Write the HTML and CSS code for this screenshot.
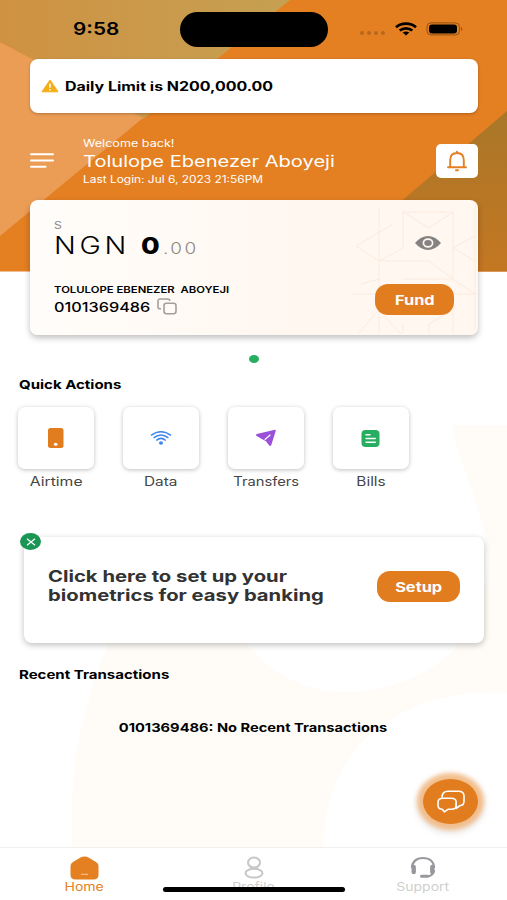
FILE: index.html
```html
<!DOCTYPE html>
<html lang="en">
<head>
    <meta charset="UTF-8">
    <meta name="viewport" content="width=device-width, initial-scale=1.0">
    <title>Home</title>
    <link rel="stylesheet" href="styles.css">
</head>
<body>
    <div class="screen">
        <!-- Background shapes -->
        <svg class="backdrop" width="507" height="900" viewBox="0 0 507 900">
            <defs>
                <linearGradient id="tan" x1="0" y1="0" x2="1" y2="0">
                    <stop offset="0" stop-color="#cf9242"/>
                    <stop offset="1" stop-color="#c6a052"/>
                </linearGradient>
                <linearGradient id="brown" x1="0" y1="0" x2="0" y2="1">
                    <stop offset="0" stop-color="#a97729"/>
                    <stop offset="1" stop-color="#c47722"/>
                </linearGradient>
            </defs>
            <rect width="507" height="271.5" fill="#e47f22"/>
            <polygon points="0,0 290,0 143,119 0,42" fill="url(#tan)"/>
            <polygon points="0,42 143,118 0,236" fill="#eb9d55"/>
            <polygon points="507,111 385,215 385,271.5 507,271.5" fill="url(#brown)"/>
            <path d="M452 425H507V900H72V800C74 740 90 690 108 643L200 620L440 500Z" fill="#fffcf8"/>
            <path d="M452 425C458 465 484 505 488 560C486 600 470 640 440 662C405 686 370 693 340 692C300 690 265 670 240 636L109 640V440Z" fill="#fff"/>
            <path d="M507 693C440 690 405 708 375 730C345 755 325 790 323 848H507Z" fill="#fff"/>
        </svg>

        <div class="status-bar">
            <span class="time"><span class="wide">9:58</span></span>
            <div class="island"></div>
            <div class="status-icons">
                <svg width="28" height="6" viewBox="0 0 28 6" fill="#b8671f">
                    <circle cx="3" cy="3" r="2"/><circle cx="10" cy="3" r="2"/><circle cx="17" cy="3" r="2"/><circle cx="24" cy="3" r="2"/>
                </svg>
                <svg class="status-wifi" width="22" height="14" viewBox="0 0 22 14" fill="none" stroke="#000" stroke-width="2.7">
                    <path d="M1 5.2C6.5 .3 15.5 .3 21 5.2"/>
                    <path d="M4.7 8.6C8.3 5.5 13.7 5.5 17.3 8.6"/>
                    <path d="M7.7 10.6Q11 8.4 14.3 10.6L11 13.6Z" fill="#000" stroke="none"/>
                </svg>
                <svg width="38" height="14" viewBox="0 0 38 14">
                    <rect x="1" y=".9" width="32.5" height="12" rx="4" fill="none" stroke="#955213" stroke-width="1"/>
                    <rect x="3" y="2.5" width="28" height="9" rx="3" fill="#000"/>
                    <path d="M35 5Q37.5 7 35 9Z" fill="#955213"/>
                </svg>
            </div>
        </div>

        <div class="limit-card">
            <svg width="18" height="14" viewBox="0 0 18 14">
                <path d="M9 1L17 12.8H1Z" fill="#f6ad16" stroke="#f6ad16" stroke-linejoin="round"/>
                <path d="M9 4.5V8.8M9 10V11.6" stroke="#fff" stroke-width="1.5"/>
            </svg>
            <span class="limit-text wide">Daily Limit is N200,000.00</span>
        </div>

        <div class="profile">
            <svg class="menu" width="24" height="15" viewBox="0 0 24 15" fill="none" stroke="#fff" stroke-width="2" stroke-linecap="round">
                <path d="M1 1.3H23M1 7.5H23M1 13.7H15.5"/>
            </svg>
            <div class="greeting">
                <div><span class="welcome wide">Welcome back!</span></div>
                <div><span class="user-name wide">Tolulope Ebenezer Aboyeji</span></div>
                <div><span class="last-login wide">Last Login: Jul 6, 2023 21:56PM</span></div>
            </div>
            <div class="bell">
                <svg width="22" height="22" viewBox="0 0 22 22" fill="none" stroke="#e47f22" stroke-width="1.9" stroke-linecap="round">
                    <path d="M2 17.2H20M4.2 17V10C4.2 5.5 7 3 11 3S17.8 5.5 17.8 10V17M11 2.8V1.6M10 20.2H12"/>
                </svg>
            </div>
        </div>

        <div class="balance-card">
            <svg class="pattern" width="125" height="134" viewBox="0 0 125 134" fill="none" stroke="#fceade" stroke-width="1">
                <path d="M26 8V134M50 12H100V79M50 12V48L26 61H76L100 79M50 12L76 28L100 12M26 61L3 46L40 24M122 4V94L100 79H50M100 48L122 36M100 48L122 61M0 94H125M26 79L8 84M26 110L48 134M50 124V134M100 94V134M76 134V124L100 110M5 134L26 110M122 94V130"/>
            </svg>
            <div class="balance">
                <div><span class="kind wide">S</span></div>
                <div class="amount"><span class="currency wide">NGN</span><span class="whole wide">0</span><span class="cents wide">.00</span></div>
                <div class="holder-row"><span class="holder wide">TOLULOPE EBENEZER&nbsp; ABOYEJI</span></div>
                <div class="account">
                    <span class="account-number wide">0101369486</span>
                    <svg width="20" height="17" viewBox="0 0 20 17" fill="none" stroke="#a3a09c" stroke-width="1.6">
                        <rect x="7" y="5.2" width="12" height="10.5" rx="2.4"/>
                        <path d="M4 10.8H3C1.6 10.8 1 10.2 1 9V3C1 1.6 1.8 1 3 1H10.5C12 1 12.8 1.6 12.8 3"/>
                    </svg>
                </div>
            </div>
            <div class="balance-side">
                <svg class="eye" width="28" height="16" viewBox="0 0 28 16">
                    <path d="M1 8Q7 1 14 1T27 8Q21 15 14 15T1 8Z" fill="#858382"/>
                    <ellipse cx="14" cy="8" rx="4.6" ry="3.9" fill="#858382" stroke="#fff6ef" stroke-width="1.7"/>
                </svg>
                <div class="button fund"><span class="wide">Fund</span></div>
            </div>
        </div>

        <div class="dot"></div>

        <h2><span class="wide">Quick Actions</span></h2>
        <div class="actions">
            <div class="action">
                <div class="tile">
                    <svg width="16" height="20" viewBox="0 0 16 20"><rect width="15.5" height="20" rx="2.5" fill="#e17d1f"/><ellipse cx="7.7" cy="16.3" rx="1.8" ry="1.5" fill="#fff"/></svg>
                </div>
                <span class="action-label airtime wide">Airtime</span>
            </div>
            <div class="action">
                <div class="tile">
                    <svg width="22" height="16" viewBox="0 0 22 16" fill="none" stroke="#3f86ec" stroke-width="1.6">
                        <path d="M1 5.4Q11-1.9 21 5.4M3.6 7.9Q11 2.1 18.4 7.9M6.3 10.5Q11 6.3 15.7 10.5"/>
                        <ellipse cx="11" cy="13" rx="2" ry="1.7" fill="#3f86ec" stroke="none"/>
                    </svg>
                </div>
                <span class="action-label wide">Data</span>
            </div>
            <div class="action">
                <div class="tile">
                    <svg width="22" height="18" viewBox="0 0 22 18">
                        <path d="M1.8 5.1L20 .8Q21 .8 20.7 1.9L16.3 16Q15.5 17.7 14.3 16.5L11 12.2L6.4 9.8L1.4 6.8Q.3 5.8 1.8 5.1Z" fill="#9b4fd9"/>
                        <path d="M9.7 10.7L15.4 5.8" stroke="#fff" stroke-width="1.2"/>
                    </svg>
                </div>
                <span class="action-label transfers wide">Transfers</span>
            </div>
            <div class="action">
                <div class="tile">
                    <svg width="19" height="17" viewBox="0 0 19 17">
                        <rect x=".5" width="18" height="17" rx="4" fill="#27ae60"/>
                        <path d="M5 4.7H9M5 8.5H14.3M5 12.2H14.3" stroke="#fff" stroke-width="1.4" stroke-linecap="round"/>
                    </svg>
                </div>
                <span class="action-label wide">Bills</span>
            </div>
        </div>

        <div class="setup-card">
            <div class="close">
                <svg width="10" height="8" viewBox="0 0 10 8" stroke="#fff" stroke-width="1.2"><path d="M1 .7L9 7.3M9 .7L1 7.3"/></svg>
            </div>
            <div class="setup-text">
                <div><span class="wide">Click here to set up your</span></div>
                <div><span class="wide">biometrics for easy banking</span></div>
            </div>
            <div class="button setup"><span class="wide">Setup</span></div>
        </div>

        <h2><span class="wide">Recent Transactions</span></h2>
        <p class="empty"><span class="wide">0101369486: No Recent Transactions</span></p>

        <div class="chat">
            <svg width="28" height="23" viewBox="0 0 28 23" fill="none" stroke="#fff" stroke-width="1.6" stroke-linejoin="round">
                <path d="M5 7.6C5 3.4 6.8 1.2 11 1.2H21.5C25 1.2 27 3 27 6V11.2C27 14 25.5 15.3 23.2 15.5L19.2 18.4V13"/>
                <path d="M6 8.2H14.2C17.2 8.2 19.2 9.5 19.2 12.3V15.5C19.2 18 17.2 19.3 14.5 19.3H11L7.3 21.8L5.3 19.3C2.5 19.3 1 17.5 1 15V12.2C1 9.8 3 8.2 6 8.2Z"/>
            </svg>
        </div>

        <nav>
            <div class="tab home">
                <svg width="29" height="24" viewBox="0 0 29 24">
                    <path d="M10.5 1.4Q14.5-.6 18.5 1.4L26 6Q28.5 7.7 28.5 10V18.5Q28.5 23.5 23.5 23.5H5.5Q.5 23.5 .5 18.5V10Q.5 7.7 3 6Z" fill="#e47f22"/>
                    <path d="M11 18.3H18" stroke="#f5c79c" stroke-width="1"/>
                </svg>
                <span class="wide">Home</span>
            </div>
            <div class="tab">
                <svg width="20" height="24" viewBox="0 0 20 24" fill="none" stroke="#c6c6c6" stroke-width="2">
                    <ellipse cx="10" cy="6.6" rx="6" ry="5"/>
                    <ellipse cx="10" cy="17.2" rx="8.5" ry="4.4"/>
                </svg>
                <span class="wide">Profile</span>
            </div>
            <div class="tab">
                <svg width="26" height="24" viewBox="0 0 26 24" fill="none" stroke="#96989c" stroke-width="2.2">
                    <path d="M2 12C2 5.5 6.5 2 13 2S24 5.5 24 12M24 14Q23.5 19.5 18 20.5"/>
                    <path d="M3.7 11V16M22.3 11V16" stroke-width="4.4" stroke-linecap="round"/>
                    <path d="M11.5 20.2H17.5" stroke-width="3" stroke-linecap="round"/>
                </svg>
                <span class="wide">Support</span>
            </div>
            <div class="home-indicator"></div>
        </nav>
    </div>
</body>
</html>
```
FILE: styles.css
```css
body {
    margin: 0;
    font-family: Inter, "Open Sans", sans-serif;
    color: #000;
}
.screen {
    position: relative;
    width: 507px;
    height: 900px;
    overflow: hidden;
    background: #fff;
    display: flex;
    flex-direction: column;
}
.screen > * {
    flex-shrink: 0;
}
svg {
    display: block;
    flex-shrink: 0;
}
.backdrop {
    position: absolute;
    top: 0;
    left: 0;
}
.screen > :not(.backdrop):not(.chat) {
    position: relative;
}
/* Extended lettering */
.wide {
    display: inline-block;
    white-space: nowrap;
    transform: scaleX(1.22);
    transform-origin: left;
}

/* Status bar */
.status-bar {
    height: 59px;
    display: grid;
    grid-template-columns: 180px 148px 1fr;
}
.time {
    padding: 19px 0 0 73px;
    font-size: 17px;
    line-height: 21px;
    font-weight: 600;
}
.island {
    height: 35px;
    margin-top: 12px;
    border-radius: 18px;
    background: #000;
}
.status-icons {
    display: flex;
    padding: 22px 0 0 31px;
    height: 14px;
}
.status-icons > :first-child {
    margin-top: 8px;
}
.status-wifi {
    margin: 0 9px 0 8px;
}

/* Daily limit */
.limit-card {
    height: 53.5px;
    margin: 0 29px 0 30px;
    padding-left: 11px;
    box-sizing: border-box;
    display: flex;
    align-items: center;
    background: #fff;
    border-radius: 8px;
    box-shadow: 0 1px 3px rgba(0, 0, 0, 0.25);
}
.limit-text {
    margin-left: 6px;
    padding-top: 1.5px;
    font-size: 12.5px;
    font-weight: 700;
    transform: scaleX(1.276);
}

/* Greeting */
.profile {
    height: 51px;
    margin: 22.5px 29px 0 30px;
    display: flex;
    align-items: center;
    color: #fff;
}
.greeting {
    margin-left: 29px;
    padding-top: 2px;
    flex: 1;
}
.welcome,
.last-login {
    font-size: 9.7px;
    line-height: 14px;
    display: block;
    width: max-content;
}
.welcome {
    transform: scaleX(1.3);
}
.last-login {
    transform: scaleX(1.23);
}
.user-name {
    font-size: 15.5px;
    line-height: 22px;
    display: block;
    width: max-content;
    transform: scaleX(1.295);
}
.bell {
    width: 42px;
    height: 34px;
    display: flex;
    align-items: center;
    justify-content: center;
    background: #fff;
    border-radius: 5px;
}

/* Balance */
.balance-card {
    height: 135px;
    margin: 13.5px 29px 0 30px;
    display: flex;
    justify-content: space-between;
    background: linear-gradient(90deg, #fffdfa, #fff7f0 60%);
    border-radius: 8px;
    box-shadow: 0 3px 6px rgba(0, 0, 0, 0.25);
}
.pattern {
    position: absolute;
    right: 0;
    top: 0;
}
.balance {
    padding: 19px 0 0 24px;
}
.kind {
    display: block;
    width: max-content;
    font-size: 10px;
    line-height: 13px;
    color: #8b8885;
}
.amount {
    height: 28px;
    display: flex;
    align-items: baseline;
    line-height: 28px;
}
.currency {
    width: 87px;
    font-size: 23.5px;
    letter-spacing: 3px;
    font-weight: 300;
}
.whole {
    width: 22px;
    font-size: 23.5px;
    font-weight: 800;
    transform: scaleX(1.15);
}
.cents {
    font-size: 15.5px;
    letter-spacing: 2px;
    font-weight: 300;
    color: #8b8885;
}
.holder-row {
    margin-top: 23px;
}
.holder {
    display: block;
    width: max-content;
    font-size: 8.7px;
    line-height: 14px;
    font-weight: 600;
    transform: scaleX(1.305);
}
.account {
    height: 19px;
    display: flex;
    align-items: center;
}
.account-number {
    width: 103px;
    padding-top: 1px;
    font-size: 13.5px;
    font-weight: 500;
    transform: scaleX(1.205);
}
.balance-side {
    position: relative;
    width: 79px;
    margin-right: 24px;
}
.eye {
    margin: 35px 0 0 39px;
}
.button {
    height: 31px;
    display: flex;
    align-items: center;
    justify-content: center;
    border-radius: 13px;
    background: #e17d1f;
    color: #fff;
    font-size: 13px;
    font-weight: 700;
}
.button .wide,
.action-label,
.empty .wide,
.tab .wide {
    transform-origin: center;
}
.button .wide {
    transform: scaleX(1.26);
}
.fund {
    margin-top: 33px;
}
.fund .wide {
    padding-top: 1px;
}
.dot {
    width: 10px;
    height: 8px;
    margin: 20px auto 0;
    border-radius: 50%;
    background: #27ae60;
}

/* Sections */
h2 {
    margin: 12.5px 0 0 19px;
    font-size: 12.3px;
    line-height: 20px;
    font-weight: 700;
}
.actions {
    display: flex;
    gap: 28.9px;
    margin: 12px 0 0 18px;
}
.action {
    width: 76px;
    display: flex;
    flex-direction: column;
    align-items: center;
}
.tile {
    width: 76px;
    height: 62px;
    display: flex;
    align-items: center;
    justify-content: center;
    background: #fff;
    border-radius: 7px;
    box-shadow: 0 1px 4px rgba(0, 0, 0, 0.25);
}
.action-label {
    margin-top: 3px;
    font-size: 12.6px;
    line-height: 20px;
    color: #454545;
}
.airtime {
    transform: scaleX(1.25);
}
.transfers {
    transform: scaleX(1.17);
}

/* Biometrics */
.setup-card {
    height: 106px;
    margin: 45px 23px 0 24px;
    padding: 0 24px;
    box-sizing: border-box;
    display: flex;
    justify-content: space-between;
    background: #fff;
    border-radius: 8px;
    box-shadow: 0 2px 6px rgba(0, 0, 0, 0.25);
}
.close {
    position: absolute;
    left: -4px;
    top: -4px;
    width: 21px;
    height: 17px;
    display: flex;
    align-items: center;
    justify-content: center;
    border-radius: 50%;
    background: #199653;
}
.setup-text {
    padding-top: 30px;
    font-size: 16px;
    line-height: 18.5px;
    font-weight: 700;
    color: #333;
}
.setup-text .wide {
    transform: scaleX(1.265);
}
.setup {
    width: 83px;
    margin-top: 34px;
}
.setup-card + h2 {
    margin-top: 21.5px;
}
.empty {
    margin: 33px 0 0;
    text-align: center;
    font-size: 12px;
    line-height: 20px;
    font-weight: 700;
}
.chat {
    position: absolute;
    left: 423px;
    top: 779px;
    width: 55px;
    height: 45px;
    display: flex;
    align-items: center;
    justify-content: center;
    border-radius: 50%;
    background: #e17d1f;
    box-shadow: 0 0 4px 6px rgba(245, 170, 100, 0.7), 0 3px 7px 7px rgba(0, 0, 0, 0.08);
}

/* Tabs */
nav {
    height: 53px;
    box-sizing: border-box;
    margin-top: auto;
    padding-top: 8px;
    display: grid;
    grid-template-columns: repeat(3, 169px);
    background: #fff;
    border-top: 1px solid #f2f0ef;
}
.tab {
    display: flex;
    flex-direction: column;
    align-items: center;
    font-size: 11.5px;
    line-height: 15px;
    color: #cfcfcf;
}
.home {
    color: #e47f22;
}
.home-indicator {
    position: absolute;
    left: 163px;
    top: 39px;
    width: 182px;
    height: 5px;
    border-radius: 3px;
    background: #000;
}
```
